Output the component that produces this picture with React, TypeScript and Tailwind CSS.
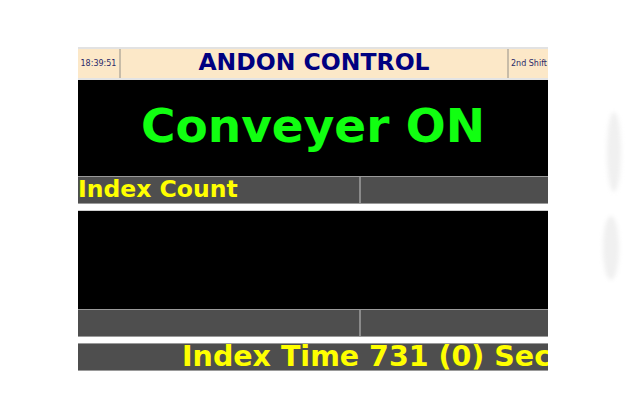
export default function App() {
  const font = { fontFamily: '"DejaVu Sans", Verdana, sans-serif' };
  return (
    <div className="relative w-[626px] h-[417px] bg-white overflow-hidden" style={font}>
      <div className="flex flex-col ml-[78px] mt-[47px] w-[470px]">
        {/* header */}
        <div className="flex h-[31px] bg-[#fce8c8] border-t-2 border-[#e2e2e2]">
          <div className="w-[41px] flex items-center justify-center text-[8px] text-[#2a2a6a] whitespace-nowrap">18:39:51</div>
          <div className="w-[2px] bg-[#c8bca8]" />
          <div className="flex-1 flex items-center justify-center font-bold text-[23.5px] text-[#000080] pb-[1px]">
            ANDON CONTROL
          </div>
          <div className="w-[2px] bg-[#c8bca8]" />
          <div className="w-[39px] flex items-center pl-[2px] text-[8px] text-[#2a2a6a] whitespace-nowrap overflow-hidden">2nd Shift</div>
        </div>
        <div className="h-[2px] bg-[#e4e4e4]" />

        {/* status */}
        <div className="h-[96px] bg-black flex items-center justify-center pb-[5px]">
          <span className="font-bold text-[47px] text-[#11ff11] leading-none">Conveyer ON</span>
        </div>
        <div className="flex h-[28px] bg-[#4e4e4e] border-y border-[#9a9a9a]">
          <div className="w-[281px] flex items-center text-[#ffff00] font-bold text-[23.5px] leading-none whitespace-nowrap">Index Count</div>
          <div className="w-[2px] bg-[#8a8a8a]" />
          <div className="flex-1" />
        </div>

        <div className="h-[6px]" />

        <div className="h-[99px] bg-black border-t border-[#cfcfcf]" />
        <div className="flex h-[28px] bg-[#4e4e4e] border-y border-[#9a9a9a]">
          <div className="w-[281px]" />
          <div className="w-[2px] bg-[#8a8a8a]" />
          <div className="flex-1" />
        </div>

        <div className="h-[6px]" />

        {/* index time: clipped at the right edge, as on the panel */}
        <div className="h-[28px] bg-[#4e4e4e] border-y border-[#9a9a9a] flex items-center overflow-hidden whitespace-nowrap pl-[104px]">
          <span className="text-[#ffff00] font-bold text-[28.5px] leading-none">Index Time 731 (0) Sec</span>
        </div>
      </div>

      {/* faint smudges on the right */}
      <div className="absolute left-[607px] top-[112px] w-[14px] h-[80px] rounded-[50%] bg-[#f0f0f0] blur-[2px]" />
      <div className="absolute left-[603px] top-[216px] w-[16px] h-[64px] rounded-[50%] bg-[#f0f0f0] blur-[2px]" />
    </div>
  );
}
